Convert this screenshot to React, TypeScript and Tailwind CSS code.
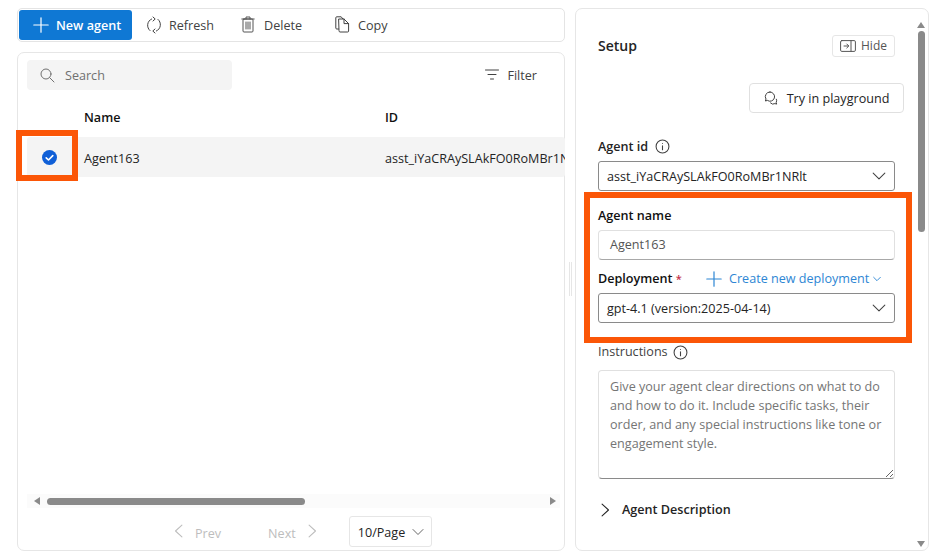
import React from "react";

const stroke = { fill: "none", stroke: "currentColor", strokeLinecap: "round" as const, strokeLinejoin: "round" as const };

function Plus({ size = 16 }: { size?: number }) {
  return (
    <svg width={size} height={size} viewBox="0 0 16 16" {...stroke} strokeWidth={1.2}>
      <path d="M8 .8v14.4M.8 8h14.4" />
    </svg>
  );
}
function RefreshIcon() {
  return (
    <svg width="16" height="18" viewBox="0 0 16 18" {...stroke} strokeWidth={1}>
      <path d="M5.6 3A6.8 6.8 0 0 0 4 14.6" />
      <path d="M10.4 15A6.8 6.8 0 0 0 12 3.4" />
      <path d="M7 1 9.2 3 7 5" />
      <path d="M9 13 6.8 15 9 17" />
    </svg>
  );
}
function TrashIcon() {
  return (
    <svg width="14" height="17" viewBox="0 0 14 17" {...stroke} strokeWidth={1}>
      <path d="M.8 3h12.4M5 3V1h4v2" />
      <rect x="2" y="3" width="10" height="13" rx="1" />
      <path d="M5 6v7M7 6v7M9 6v7" />
    </svg>
  );
}
function CopyIcon() {
  return (
    <svg width="15" height="17" viewBox="0 0 15 17" {...stroke} strokeWidth={1}>
      <path d="M3.5 13H1.8a1 1 0 0 1-1-1V1.8a1 1 0 0 1 1-1h4.4l1.6 2" />
      <path d="M4 3h5l4.6 4.6V15a1 1 0 0 1-1 1H5a1 1 0 0 1-1-1z" />
      <path d="M9 3v4.6h4.6" />
    </svg>
  );
}
function SearchIcon() {
  return (
    <svg width="15" height="15" viewBox="0 0 15 15" {...stroke} strokeWidth={1}>
      <circle cx="6" cy="6" r="5" />
      <path d="M9.7 9.7 14 14" />
    </svg>
  );
}
function FilterIcon() {
  return (
    <svg width="14" height="11" viewBox="0 0 14 11" {...stroke} strokeWidth={1}>
      <path d="M.5 1h13M3 5.5h8M5.5 10h3" />
    </svg>
  );
}
function Chevron({ size = 12, dir = "down", weight = 0.9 }: { size?: number; dir?: "down" | "left" | "right"; weight?: number }) {
  const d = dir === "down" ? "M1 3.5 6 8.5l5-5" : dir === "left" ? "M8.5 1 3 6l5.5 5" : "M3.5 1 9 6l-5.5 5";
  return (
    <svg width={size} height={size} viewBox="0 0 12 12" {...stroke} strokeWidth={weight}>
      <path d={d} />
    </svg>
  );
}
function InfoIcon() {
  return (
    <svg width="15" height="15" viewBox="0 0 14 14" {...stroke} strokeWidth={1}>
      <circle cx="7" cy="7" r="6" />
      <path d="M7 6.3v3.7" />
      <circle cx="7" cy="4.2" r=".5" fill="currentColor" stroke="none" />
    </svg>
  );
}
function HidePanelIcon() {
  return (
    <svg width="16" height="12" viewBox="0 0 16 12" {...stroke} strokeWidth={1}>
      <rect x=".6" y=".6" width="14.8" height="10.8" rx="1.2" />
      <path d="M11 .6v10.8M4 6h4.5M6.8 4l2 2-2 2" />
    </svg>
  );
}
function ChatIcon() {
  return (
    <svg width="14" height="14" viewBox="0 0 14 14" {...stroke} strokeWidth={1}>
      <path d="M6 1a4.6 4.6 0 0 0-4 7L1.4 10l2-.6A4.6 4.6 0 1 0 6 1z" />
      <path d="M6.5 12a3.6 3.6 0 0 0 4.4.6l1.8.5-.5-1.7a3.6 3.6 0 0 0 .2-3.2" />
    </svg>
  );
}
function CheckedIcon() {
  return (
    <svg width="15" height="15" viewBox="0 0 15 15">
      <circle cx="7.5" cy="7.5" r="7.5" fill="#0f5fd7" />
      <path d="M4.2 7.8 6.5 10l4.3-4.4" fill="none" stroke="#fff" strokeWidth="1.6" strokeLinecap="round" strokeLinejoin="round" />
    </svg>
  );
}
function Triangle({ dir, className }: { dir: "left" | "right" | "up" | "down"; className?: string }) {
  const points = { left: "6,0 6,8 0,4", right: "0,0 0,8 6,4", up: "0,6 8,6 4,0", down: "0,0 8,0 4,6" }[dir];
  const vertical = dir === "up" || dir === "down";
  return (
    <svg width={vertical ? 8 : 6} height={vertical ? 6 : 8} className={className}>
      <polygon points={points} fill="#8a8a8a" />
    </svg>
  );
}

function ToolButton({ icon, label, className }: { icon: React.ReactNode; label: string; className: string }) {
  return (
    <button className={`flex items-center text-[12.6px] font-medium text-[#424242] ${className}`}>
      {icon}
      <span className="pt-[2px]">{label}</span>
    </button>
  );
}

function Toolbar() {
  return (
    <div className="flex h-[34px] shrink-0 items-center rounded-[5px] border border-[#e4e4e4] pl-[1px]">
      <button className="flex h-[30px] w-[113px] items-center gap-[7px] rounded-[3px] bg-[#0f78d4] pl-[14px] text-[12.6px] font-semibold text-white">
        <Plus />
        <span className="pt-[2px]">New agent</span>
      </button>
      <ToolButton icon={<RefreshIcon />} label="Refresh" className="ml-[14px] gap-[7px]" />
      <ToolButton icon={<span className="text-[#555]"><TrashIcon /></span>} label="Delete" className="ml-[27px] gap-[9px]" />
      <ToolButton icon={<CopyIcon />} label="Copy" className="ml-[33px] gap-[8px]" />
    </div>
  );
}

function TableCard() {
  return (
    <div className="flex min-h-0 flex-1 flex-col rounded-[7px] border border-[#e6e6e6] pl-[9px]">
      <div className="mt-[7px] flex h-[30px] items-center justify-between pr-[27px]">
        <div className="flex h-[30px] w-[205px] items-center gap-[10px] rounded-[4px] bg-[#f4f4f4] pl-[13px] text-[12.6px] text-[#707070]">
          <SearchIcon />
          <span className="pt-[2px]">Search</span>
        </div>
        <button className="flex items-center gap-[8px] text-[12.6px] font-medium text-[#424242]">
          <FilterIcon />
          <span className="pt-[2px]">Filter</span>
        </button>
      </div>
      <div className="mt-[9px] flex h-[38px] items-center pl-[57px] text-[12.6px] font-semibold text-[#111]">
        <span className="w-[301px]">Name</span>
        <span>ID</span>
      </div>
      <div className="-mr-[1px] flex h-[40px] items-center overflow-hidden rounded-[3px] bg-[#f4f4f4] text-[12.6px] text-[#242424]">
        <span className="ml-[15px] mr-[27px] flex"><CheckedIcon /></span>
        <span className="w-[301px] shrink-0 pt-[4px]">Agent163</span>
        <span className="whitespace-nowrap pt-[4px]">asst_iYaCRAySLAkFO0RoMBr1NRlt</span>
      </div>
      <div className="flex-1" />
      <div className="mr-[4px] flex h-[14px] items-center bg-[#fbfbfb] pl-[7px] pr-[4px]">
        <Triangle dir="left" />
        <div className="ml-[7px] h-[7px] w-[258px] rounded-full bg-[#8a8a8a]" />
        <div className="flex-1" />
        <Triangle dir="right" />
      </div>
      <div className="mb-[3px] mt-[8px] flex h-[31px] items-center pl-[145px] text-[12.6px] font-medium text-[#bdbdbd]">
        <span className="flex items-center gap-[9px]"><Chevron size={14} dir="left" /><span className="pt-[5px]">Prev</span></span>
        <span className="ml-[47px] flex items-center gap-[9px]"><span className="pt-[5px]">Next</span><Chevron size={14} dir="right" /></span>
        <button className="ml-[30px] flex h-[31px] w-[83px] items-center gap-[7px] rounded-[3px] border border-[#e6e6e6] pl-[8px] font-normal text-[#242424]">
          <span className="pt-[4px]">10/Page</span>
          <span className="text-[#555]"><Chevron size={12} /></span>
        </button>
      </div>
    </div>
  );
}

function SelectBox({ value }: { value: string }) {
  return (
    <div className="flex h-[30px] items-center justify-between rounded-[3px] border border-[#8a8a8a] pl-[8px] pr-[8px] text-[12.6px] text-[#242424]">
      <span className="pt-[2px]">{value}</span>
      <span className="text-[#424242]"><Chevron size={14} /></span>
    </div>
  );
}

function SetupPanel() {
  return (
    <div className="relative flex w-[354px] shrink-0 flex-col overflow-hidden rounded-[7px] border border-[#e6e6e6] pl-[22px] pr-[33px]">
      <div className="mt-[25px] flex h-[22px] items-center justify-between">
        <h2 className="text-[14px] font-semibold text-[#242424]">Setup</h2>
        <button className="mt-[2px] flex h-[22px] w-[63px] items-center justify-center gap-[5px] rounded-[3px] border border-[#e6e6e6] text-[12px] text-[#555]">
          <HidePanelIcon />
          Hide
        </button>
      </div>
      <div className="-mr-[9px] mt-[27px] flex justify-end">
        <button className="flex h-[30px] w-[155px] items-center justify-center gap-[9px] rounded-[4px] border border-[#e0e0e0] text-[12.6px] font-medium text-[#242424]">
          <span className="text-[#424242]"><ChatIcon /></span>
          <span className="pt-[2px]">Try in playground</span>
        </button>
      </div>
      <div className="mb-[5px] mt-[23px] flex h-[20px] items-center gap-[7px] text-[12.6px] font-semibold text-[#242424]">
        <span className="pt-[2px]">Agent id</span>
        <span className="font-normal text-[#424242]"><InfoIcon /></span>
      </div>
      <SelectBox value="asst_iYaCRAySLAkFO0RoMBr1NRlt" />
      <div className="mb-[4px] mt-[15px] h-[20px] text-[12.6px] font-semibold leading-[20px] text-[#111]">Agent name</div>
      <div className="flex h-[30px] items-center rounded-[4px] border border-[#e0e0e0] border-b-[#a8a8a8] pl-[11px] text-[12.6px] text-[#555]">
        Agent163
      </div>
      <div className="mb-[4px] mt-[9px] flex h-[20px] items-center whitespace-nowrap text-[12.6px] font-semibold text-[#111]">
        <span className="w-[108px]">Deployment <span className="text-[11px] text-[#c4314b]">*</span></span>
        <span className="flex items-center gap-[7px] font-normal text-[#2d86d4]">
          <Plus />
          Create new deployment
          <span className="-ml-[3px] flex"><Chevron size={8} weight={1.4} /></span>
        </span>
      </div>
      <SelectBox value="gpt-4.1 (version:2025-04-14)" />
      <div className="mb-[8px] mt-[19px] flex h-[20px] items-center gap-[5px] text-[12.6px] text-[#424242]">
        Instructions
        <InfoIcon />
      </div>
      <textarea
        readOnly
        className="h-[109px] shrink-0 rounded-[4px] border border-[#e0e0e0] border-b-[#8a8a8a] pl-[11px] pr-[8px] pt-[6px] text-[12.6px] leading-[19px] text-[#242424] outline-none placeholder:text-[#757575]"
        placeholder="Give your agent clear directions on what to do and how to do it. Include specific tasks, their order, and any special instructions like tone or engagement style."
      />
      <div className="mt-[21px] flex h-[20px] items-center gap-[10px] text-[12.6px] font-semibold text-[#242424]">
        <span className="text-[#242424]"><Chevron size={14} dir="right" /></span>
        Agent Description
      </div>
      <div className="absolute right-[3px] top-0 flex h-full w-[8px] flex-col items-center pb-[3px] pt-[13px]">
        <Triangle dir="up" />
        <div className="mt-[3px] h-[201px] w-[7px] rounded-full bg-[#8a8a8a]" />
        <div className="flex-1" />
        <Triangle dir="down" />
      </div>
    </div>
  );
}

export default function App() {
  return (
    <div
      className="relative flex h-[556px] w-[936px] gap-[10px] overflow-hidden bg-white pb-[5px] pl-[17px] pt-[8px]"
      style={{ fontFamily: '"Open Sans", "Noto Sans", sans-serif' }}
    >
      <div className="flex w-[548px] shrink-0 flex-col gap-[10px]">
        <Toolbar />
        <TableCard />
      </div>
      <SetupPanel />
      <div className="absolute left-[569px] top-[262px] h-[34px] w-[3px] border-x border-[#e6e6e6]" />
      <div className="pointer-events-none absolute left-[16px] top-[130px] h-[51px] w-[62px] border-[6px] border-[#fb5607]" />
      <div className="pointer-events-none absolute left-[584px] top-[192px] h-[151px] w-[328px] border-[6px] border-[#fb5607]" />
    </div>
  );
}
